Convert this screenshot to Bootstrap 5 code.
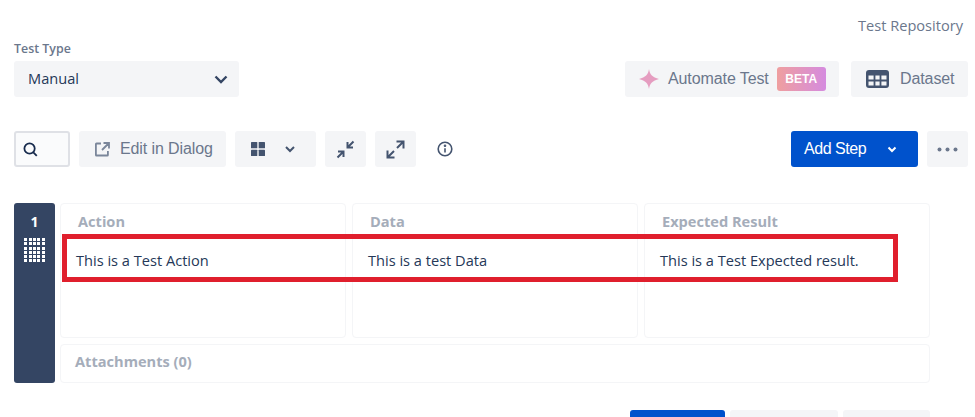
<!DOCTYPE html>
<html lang="en">
<head>
    <meta charset="UTF-8">
    <meta name="viewport" content="width=device-width, initial-scale=1.0">
    <title>Test Steps</title>
    <link href="https://cdn.jsdelivr.net/npm/bootstrap@5.3.0/dist/css/bootstrap.min.css" rel="stylesheet">
    <style>
        html, body { height: 417px; overflow: hidden; }
        body {
            background: #fff;
            color: #253858;
            font-family: "Open Sans", sans-serif;
            font-size: 14.6px;
        }
        .page-wrap { padding: 0 7px 0 14px; }
        .repo-link {
            height: 61px;
            padding: 15px 5px 0 0;
            text-align: right;
            color: #6b778c;
            font-size: 14.6px;
            line-height: 20px;
        }
        .type-label {
            position: absolute;
            top: -20px;
            left: 0;
            color: #6b778c;
            font-size: 12.4px;
            font-weight: 600;
            line-height: 16px;
        }
        .type-select {
            width: 225px;
            height: 36px;
            padding: 0 10px 0 14px;
            background: #f4f5f7;
            border-radius: 3px;
        }
        .tool-btn {
            height: 36px;
            padding: 0;
            border: 0;
            border-radius: 3px;
            background: #f4f5f7;
            color: #6b778c;
            font-family: "Liberation Sans", sans-serif;
            font-size: 16px;
            letter-spacing: -.1px;
        }
        .tool-btn:hover { background: #ebecf0; color: #6b778c; }
        .btn-automate { width: 214px; margin-right: 12px; }
        .btn-dataset { width: 117px; }
        .beta-tag {
            width: 49px;
            height: 24px;
            margin-left: 8px;
            border-radius: 3px;
            background: linear-gradient(90deg, #ef9f9f, #d58bdf);
            color: #fff;
            font-size: 12px;
            font-weight: 700;
            line-height: 24px;
            text-align: center;
            letter-spacing: 0;
        }
        .toolbar { margin-top: 34px; }
        .toolbar-left { gap: 9px; }
        .search-box {
            width: 56px;
            height: 36px;
            padding-left: 7px;
            border: 2px solid #dfe1e6;
            border-radius: 3px;
            background: #fafbfc;
        }
        .btn-edit { width: 147px; }
        .btn-view { width: 81px; }
        .btn-square { width: 41px; }
        .btn-more { width: 41px; }
        .btn-add {
            width: 127px;
            margin-right: 9px;
            background: #0052cc;
            color: #fff;
            letter-spacing: -.45px;
        }
        .btn-add:hover { background: #0052cc; color: #fff; }
        .info-icon { width: 58px; margin-left: -9px; }
        .step-row { margin-top: 36px; width: 916px; height: 180px; }
        .step-handle {
            width: 41px;
            margin-right: 5px;
            padding-top: 10px;
            border-radius: 3px;
            background: #344563;
            color: #fff;
            font-size: 14px;
            font-weight: 700;
            line-height: 17px;
        }
        .dot-grid {
            display: grid;
            grid-template-columns: repeat(5, 3px);
            gap: 1.3px;
            margin-top: 8px;
        }
        .dot-grid i { display: block; height: 3px; background: #fff; }
        .step-body { width: 870px; }
        .step-cols { height: 135px; gap: 6px; margin-bottom: 6px; }
        .step-col {
            width: 286px;
            border: 1px solid #f4f5f7;
            border-radius: 4px;
            padding: 8px 15px;
        }
        .col-title {
            margin-left: 2px;
            margin-bottom: 20px;
            color: #a5adba;
            font-weight: 700;
            line-height: 19px;
        }
        .col-text { line-height: 19px; white-space: nowrap; }
        .attach-bar {
            height: 39px;
            padding: 7px 14px;
            border: 1px solid #f4f5f7;
            border-radius: 4px;
            color: #a5adba;
            font-weight: 700;
            line-height: 19px;
        }
        .red-mark {
            position: absolute;
            left: 48px;
            top: 31px;
            width: 836px;
            height: 48px;
            border: 5px solid #e01f2d;
            pointer-events: none;
        }
        .footer-btns { margin-top: 27px; width: 916px; gap: 5px; }
        .foot-btn { height: 7px; border-radius: 3px 3px 0 0; background: #f4f5f7; }
        .foot-save { width: 95px; background: #0052cc; }
        .foot-mid { width: 108px; }
        .foot-end { width: 87px; }
    </style>
</head>
<body>
<div class="page-wrap">
    <div class="repo-link">Test Repository</div>

    <div class="d-flex justify-content-between">
        <div class="position-relative">
            <div class="type-label">Test Type</div>
            <div class="type-select d-flex align-items-center justify-content-between">
                <span>Manual</span>
                <svg width="16" height="16" viewBox="0 0 16 16" fill="none" stroke="#344563" stroke-width="2.4"><path d="M2.5 5.5 8 11l5.5-5.5"/></svg>
            </div>
        </div>
        <div class="d-flex">
            <button type="button" class="btn tool-btn btn-automate d-flex align-items-center">
                <svg style="margin:0 9px 0 14px" width="20" height="20" viewBox="0 0 20 20" fill="#e59dc0"><path d="M10 0c.8 5.500 3.500 8.300 10 10-6.500 1.700-9.200 4.500-10 10-.8-5.500-3.500-8.300-10-10 6.500-1.700 9.200-4.500 10-10z"/><circle cx="10" cy="10" r="3.600"/></svg>
                <span>Automate Test</span>
                <span class="beta-tag">BETA</span>
            </button>
            <button type="button" class="btn tool-btn btn-dataset d-flex align-items-center">
                <svg style="margin:0 11px 0 15px" width="23" height="18" viewBox="0 0 23 18"><rect width="23" height="18" rx="3" fill="#44546f"/><path d="M2.500 5.500h18v10h-18z" fill="#f4f5f7"/><path d="M8.500 5v11M14.500 5v11M2 10.500h19" stroke="#44546f" stroke-width="1.800"/></svg>
                <span>Dataset</span>
            </button>
        </div>
    </div>

    <div class="toolbar d-flex justify-content-between">
        <div class="toolbar-left d-flex align-items-center">
            <div class="search-box d-flex align-items-center">
                <svg width="15" height="15" viewBox="0 0 16 16" fill="none" stroke="#172b4d" stroke-width="1.900"><circle cx="7" cy="7" r="5.500"/><path d="m11 11 3.700 3.700"/></svg>
            </div>
            <button type="button" class="btn tool-btn btn-edit d-flex align-items-center">
                <svg style="margin:0 10px 0 16px" width="15" height="15" viewBox="0 0 15 15" fill="none" stroke="#7a869a" stroke-width="1.800"><path d="M6 1.500H1.500a.6.6 0 0 0-.6.6v10.800c0 .3.3.6.6.6h10.800c.3 0 .6-.3.6-.6V9M8.500 1h5.500v5.500M14 1 7 8"/></svg>
                <span>Edit in Dialog</span>
            </button>
            <button type="button" class="btn tool-btn btn-view d-flex align-items-center">
                <svg style="margin:0 20px 0 16px" width="14" height="14" viewBox="0 0 14 14" fill="#44546f"><rect width="6.300" height="6.300" rx=".6"/><rect x="7.700" width="6.300" height="6.300" rx=".6"/><rect y="7.700" width="6.300" height="6.300" rx=".6"/><rect x="7.700" y="7.700" width="6.300" height="6.300" rx=".6"/></svg>
                <svg width="10" height="10" viewBox="0 0 10 10" fill="none" stroke="#44546f" stroke-width="2"><path d="M1 3l4 4 4-4"/></svg>
            </button>
            <button type="button" class="btn tool-btn btn-square d-flex align-items-center justify-content-center">
                <svg width="19" height="19" viewBox="0 0 19 19" fill="none" stroke="#44546f" stroke-width="2"><path d="M1.500 17.500 7 12M2 11.500h5.500V17M17.500 1.500 12 7M17 7.500h-5.500V2"/></svg>
            </button>
            <button type="button" class="btn tool-btn btn-square d-flex align-items-center justify-content-center">
                <svg width="19" height="19" viewBox="0 0 19 19" fill="none" stroke="#44546f" stroke-width="2"><path d="M2 17 8 11M1.500 10.500v7h7M17 2l-6 6M10.500 1.500h7v7"/></svg>
            </button>
            <div class="info-icon d-flex justify-content-center">
                <svg width="16" height="16" viewBox="0 0 16 16" fill="none" stroke="#44546f" stroke-width="1.600"><circle cx="8" cy="8" r="6.800"/><path d="M8 7.200v4.300"/><circle cx="8" cy="4.800" r=".5" fill="#44546f"/></svg>
            </div>
        </div>
        <div class="d-flex align-items-center">
            <button type="button" class="btn tool-btn btn-add d-flex align-items-center">
                <span style="margin-left:13px">Add Step</span>
                <svg style="margin-left:21px" width="10" height="10" viewBox="0 0 10 10" fill="none" stroke="#fff" stroke-width="2"><path d="M1.500 3.500 5 7l3.500-3.500"/></svg>
            </button>
            <button type="button" class="btn tool-btn btn-more d-flex align-items-center justify-content-center">
                <svg width="21" height="5" viewBox="0 0 21 5" fill="#6b778c"><circle cx="2.500" cy="2.500" r="2"/><circle cx="10.500" cy="2.500" r="2"/><circle cx="18.500" cy="2.500" r="2"/></svg>
            </button>
        </div>
    </div>

    <div class="step-row d-flex position-relative">
        <div class="step-handle d-flex flex-column align-items-center">
            <div>1</div>
            <div class="dot-grid">
                <i></i><i></i><i></i><i></i><i></i>
                <i></i><i></i><i></i><i></i><i></i>
                <i></i><i></i><i></i><i></i><i></i>
                <i></i><i></i><i></i><i></i><i></i>
                <i></i><i></i><i></i><i></i><i></i>
                <i></i><i></i><i></i><i></i><i></i>
            </div>
        </div>
        <div class="step-body">
            <div class="step-cols d-flex">
                <div class="step-col">
                    <div class="col-title">Action</div>
                    <div class="col-text">This is a Test Action</div>
                </div>
                <div class="step-col">
                    <div class="col-title">Data</div>
                    <div class="col-text">This is a test Data</div>
                </div>
                <div class="step-col">
                    <div class="col-title">Expected Result</div>
                    <div class="col-text">This is a Test Expected result.</div>
                </div>
            </div>
            <div class="attach-bar">Attachments (0)</div>
        </div>
        <div class="red-mark"></div>
    </div>

    <div class="footer-btns d-flex justify-content-end">
        <div class="foot-btn foot-save"></div>
        <div class="foot-btn foot-mid"></div>
        <div class="foot-btn foot-end"></div>
    </div>
</div>
<script src="https://cdn.jsdelivr.net/npm/bootstrap@5.3.0/dist/js/bootstrap.bundle.min.js"></script>
</body>
</html>
